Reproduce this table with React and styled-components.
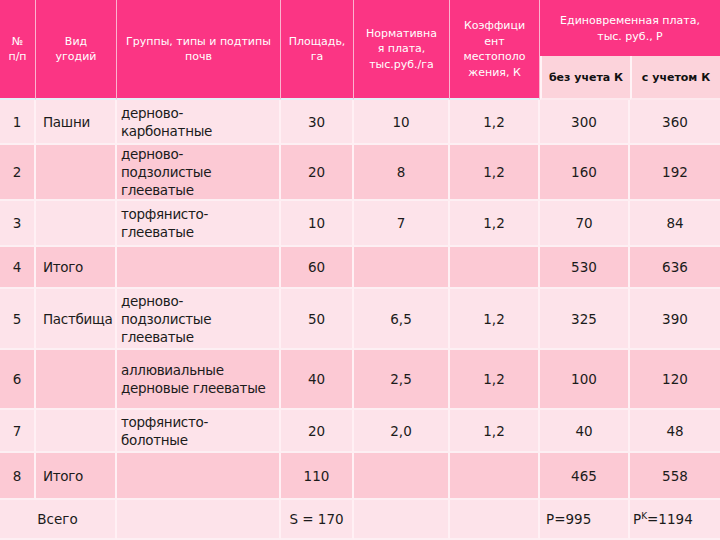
import React from "react";
import styled, { createGlobalStyle } from "styled-components";

const Global = createGlobalStyle`
  html, body { margin: 0; padding: 0; background: #fde4ea; }
  body { font-family: "DejaVu Sans", "Noto Sans", sans-serif; }
`;

const Table = styled.table`
  width: 720px;
  table-layout: fixed;
  border-collapse: separate;
  border-spacing: 0;
  font-family: "DejaVu Sans", "Noto Sans", sans-serif;
`;

const HeadCell = styled.th`
  box-sizing: border-box;
  background: #fb3584;
  color: #fff;
  font-weight: normal;
  font-size: 11px;
  line-height: 15.5px;
  text-align: center;
  vertical-align: middle;
  padding: 0 2px;
  border-right: 1px solid #fbb3cf;
  border-bottom: ${(p) => (p.$last ? "2px solid #e3f1f6" : "1px solid #fbb3cf")};
  height: ${(p) => p.$h}px;
  &:last-child { border-right: none; }
`;

const SubCell = styled.th`
  box-sizing: border-box;
  background: #fcd3db;
  color: #111;
  font-weight: bold;
  font-size: 11px;
  text-align: center;
  vertical-align: middle;
  border-left: 2px solid #fff3f6;
  border-bottom: 2px solid #fde9ee;
  height: 43px;
`;

const Row = styled.tr`
  background: ${(p) => (p.$dark ? "#fcc9d4" : "#fde3ea")};
  height: ${(p) => p.$h}px;
`;

const Cell = styled.td`
  box-sizing: border-box;
  font-size: 13.5px;
  line-height: 18px;
  color: #1b1b1b;
  white-space: nowrap;
  overflow: visible;
  text-align: ${(p) => p.$align || "center"};
  vertical-align: middle;
  padding: ${(p) => p.$pad || "0 2px"};
  letter-spacing: ${(p) => (p.$tight ? "-0.3px" : "0")};
  border-right: 2px solid #fff0f4;
  border-bottom: 2px solid #fdeff3;
  &:last-child { border-right: none; }
`;

const Sup = styled.sup`
  font-size: 9px;
  vertical-align: 5px;
  line-height: 0;
`;

const rows = [
  { n: "1", kind: "Пашни", soil: ["дерново-", "карбонатные"], s: "30", norm: "10", k: "1,2", p: "300", pk: "360", h: 45 },
  { n: "2", kind: "", soil: ["дерново-", "подзолистые", "глеевaтые"], s: "20", norm: "8", k: "1,2", p: "160", pk: "192", h: 56 },
  { n: "3", kind: "", soil: ["торфянисто-", "глеевaтые"], s: "10", norm: "7", k: "1,2", p: "70", pk: "84", h: 46 },
  { n: "4", kind: "Итого", soil: [], s: "60", norm: "", k: "", p: "530", pk: "636", h: 42 },
  { n: "5", kind: "Пастбища", soil: ["дерново-", "подзолистые", "глеевaтые"], s: "50", norm: "6,5", k: "1,2", p: "325", pk: "390", h: 61 },
  { n: "6", kind: "", soil: ["аллювиальные", "дерновые глеевaтые"], s: "40", norm: "2,5", k: "1,2", p: "100", pk: "120", h: 60 },
  { n: "7", kind: "", soil: ["торфянисто-", "болотные"], s: "20", norm: "2,0", k: "1,2", p: "40", pk: "48", h: 43 },
  { n: "8", kind: "Итого", soil: [], s: "110", norm: "", k: "", p: "465", pk: "558", h: 47 },
];

const Lines = ({ items }) =>
  items.map((t, i) => (
    <React.Fragment key={i}>
      {i > 0 && <br />}
      {t}
    </React.Fragment>
  ));

export default function App() {
  return (
    <>
      <Global />
      <Table>
        <colgroup>
          <col style={{ width: 36 }} />
          <col style={{ width: 81 }} />
          <col style={{ width: 164 }} />
          <col style={{ width: 73 }} />
          <col style={{ width: 96 }} />
          <col style={{ width: 90 }} />
          <col style={{ width: 90 }} />
          <col style={{ width: 90 }} />
        </colgroup>
        <thead>
          <tr>
            <HeadCell rowSpan={2} $last $h={100}><Lines items={["№", "п/п"]} /></HeadCell>
            <HeadCell rowSpan={2} $last><Lines items={["Вид", "угодий"]} /></HeadCell>
            <HeadCell rowSpan={2} $last><Lines items={["Группы, типы и подтипы", "почв"]} /></HeadCell>
            <HeadCell rowSpan={2} $last><Lines items={["Площадь,", "га"]} /></HeadCell>
            <HeadCell rowSpan={2} $last><Lines items={["Нормативна", "я плата,", "тыс.руб./га"]} /></HeadCell>
            <HeadCell rowSpan={2} $last><Lines items={["Коэффици", "ент", "местополо", "жения, К"]} /></HeadCell>
            <HeadCell colSpan={2} $h={55} style={{ verticalAlign: "top", paddingTop: 13, borderBottom: "none" }}>
              <Lines items={["Единовременная плата,", "тыс. руб., Р"]} />
            </HeadCell>
          </tr>
          <tr>
            <SubCell>без учета К</SubCell>
            <SubCell>с учетом К</SubCell>
          </tr>
        </thead>
        <tbody>
          {rows.map((r, i) => (
            <Row key={r.n} $dark={i % 2 === 1} $h={r.h}>
              <Cell>{r.n}</Cell>
              <Cell $align="left" $pad="0 0 0 7px" $tight>{r.kind}</Cell>
              <Cell $align="left" $pad="0 0 0 4px" $tight><Lines items={r.soil} /></Cell>
              <Cell>{r.s}</Cell>
              <Cell>{r.norm}</Cell>
              <Cell>{r.k}</Cell>
              <Cell>{r.p}</Cell>
              <Cell>{r.pk}</Cell>
            </Row>
          ))}
          <Row $h={40}>
            <Cell colSpan={2}>Всего</Cell>
            <Cell></Cell>
            <Cell>S = 170</Cell>
            <Cell></Cell>
            <Cell></Cell>
            <Cell $align="left" $pad="0 2px 0 6px">P=995</Cell>
            <Cell $align="left" $pad="0 2px 0 3px">P<Sup>K</Sup>=1194</Cell>
          </Row>
        </tbody>
      </Table>
    </>
  );
}
